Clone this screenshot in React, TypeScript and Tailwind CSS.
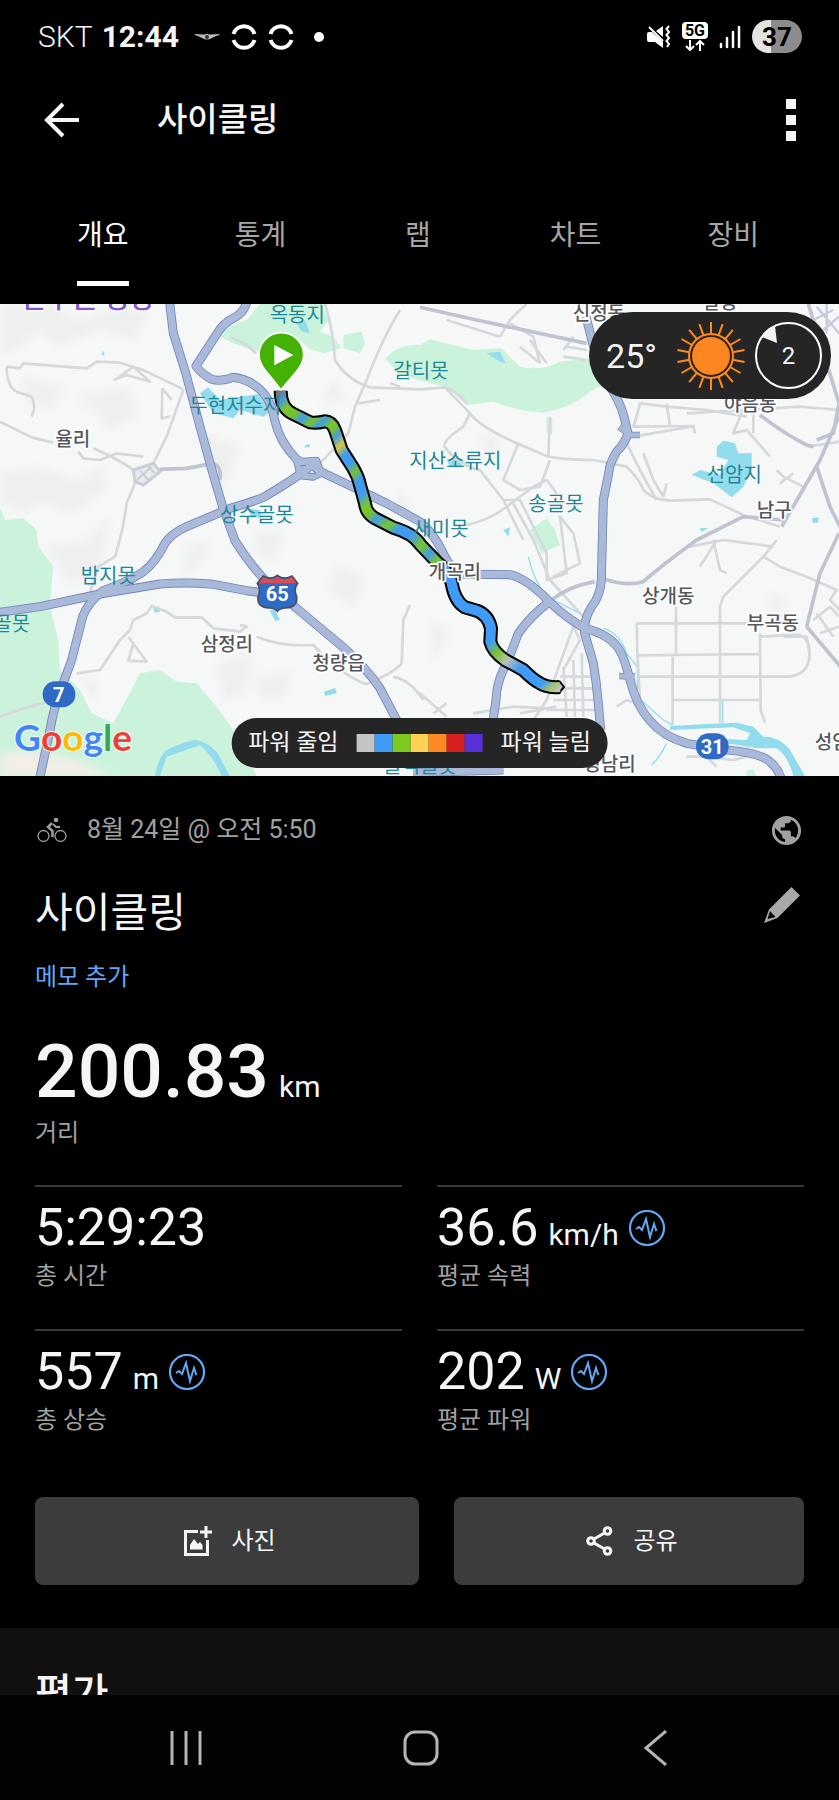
import { MdPublic } from "react-icons/md";

const tabs = ["개요", "통계", "랩", "차트", "장비"];

const stats = [
  { value: "5:29:23", unit: "", label: "총 시간", badge: false },
  { value: "36.6", unit: "km/h", label: "평균 속력", badge: true },
  { value: "557", unit: "m", label: "총 상승", badge: true },
  { value: "202", unit: "W", label: "평균 파워", badge: true },
];

const legend = [
  "bg-[#c4c4c6]",
  "bg-[#3f9bf5]",
  "bg-[#7ccb1c]",
  "bg-[#ffd152]",
  "bg-[#ff8a24]",
  "bg-[#d6211f]",
  "bg-[#5a31d8]",
];

// Map units: three to a CSS pixel at phone width
const highways = [
  "M508 0L520 100L556 215L600 380L640 525L668 620L705 722Q740 780 790 835L890 925L1030 1042Q1100 1105 1140 1165L1190 1260L1225 1340",
  "M742 0Q735 35 705 52Q670 70 655 95L588 198Q600 218 635 238Q660 246 700 232Q760 240 795 285Q815 310 824 360Q838 425 890 478L930 500L1040 552L1160 610L1260 665Q1300 700 1325 750Q1345 800 1380 822L1530 824Q1580 835 1648 905Q1700 955 1755 985Q1820 1000 1850 1038Q1870 1060 1890 1140Q1908 1215 1950 1262Q1990 1310 2060 1330L2180 1350Q2280 1358 2310 1385Q2335 1405 2345 1440",
  "M915 510Q880 540 790 592Q740 612 690 625L560 680Q515 700 495 730Q465 790 430 815Q385 845 310 872Q265 905 248 950L215 1080L180 1175Q160 1230 150 1290L118 1440",
  "M-10 938L120 920L300 882L480 852Q560 845 640 853L740 872L800 880",
  "M1758 50L1778 130L1830 260Q1862 310 1872 350L1884 400Q1875 430 1850 455Q1828 490 1826 520L1810 600L1804 840Q1800 890 1775 920Q1750 960 1754 1000L1780 1090Q1790 1150 1795 1210L1802 1290",
  "M1648 905Q1590 950 1555 1000Q1530 1070 1510 1110Q1490 1150 1488 1200L1478 1270",
  "M1240 1418L1510 1410",
];

const ramps =
  "M890 485L950 480L965 520L940 532L900 528Z M1858 380L1890 405L1920 405M1858 1128L1905 1130";

const arterials = [
  "M478 508L560 505L640 490Q665 500 660 540",
  "M1650 905Q1700 860 1785 845",
  "M1815 838Q1880 860 1930 845Q1980 800 2090 720L2230 650L2350 660",
  "M2280 345Q2350 400 2420 435L2440 440",
  "M2345 680L2460 480L2517 350",
  "M2420 980L2460 820L2517 700",
  "M2420 980L2530 1110",
  "M1260 22L1430 60L1760 130",
  "M2425 12L2517 310L2500 400L2450 420",
  "M2450 500L2490 620L2530 700",
];

const streets = [
  "M20 200L60 205L70 190L260 205L290 185L360 188L430 210L550 268",
  "M20 200Q20 260 50 275L95 290Q110 320 95 350",
  "M0 365L95 412L160 428",
  "M235 455L250 475L300 480L350 460L430 470",
  "M280 445Q360 480 400 510",
  "M345 240L400 200L450 245L380 225L340 240",
  "M550 270L500 410L460 490L405 550L380 610Q370 690 345 770L295 800L250 940",
  "M487 265L485 355L510 350M487 265L515 300",
  "M230 1120L300 1110L360 1020L390 990L400 960L440 940L455 918L500 935L525 953L605 952L640 985L720 995L740 980L720 975",
  "M385 1010L440 1085L385 1082L400 1030",
  "M770 1010Q840 1040 940 1035L960 1055",
  "M950 1050Q1050 1140 1100 1152Q1180 1120 1205 1090L1210 960L1230 915",
  "M1180 1130Q1230 1140 1270 1200",
  "M0 1250Q80 1220 130 1210",
  "M1200 30Q1150 110 1100 240L1065 320L1045 400L960 490",
  "M975 12Q1000 90 1005 180Q1040 240 1110 262L1260 268L1335 262Q1370 270 1400 310",
  "M1075 310L1140 300M1170 250L1200 260",
  "M690 110Q740 130 768 160",
  "M1335 262L1410 340Q1440 380 1540 425L1645 470Q1700 480 1780 480L1880 500Q1920 540 1930 570Q1960 600 2010 602L2130 598L2230 645L2340 680",
  "M1410 340L1390 380Q1330 420 1333 440Q1380 500 1440 510L1510 600L1570 720",
  "M1645 470L1650 350",
  "M1555 430L1510 540L1560 570L1620 560L1650 480",
  "M1400 675Q1470 660 1520 620L1600 560L1640 540L1670 580",
  "M1540 610L1600 720L1650 840L1750 950",
  "M1510 600L1560 600L1640 760L1640 840L1700 820L1680 650L1720 700L1740 790L1660 830",
  "M1560 140L1620 190M1530 70L1600 110L1620 190M1340 60L1500 110M1500 110L1530 60L1560 30L1580 12M1590 120L1640 190",
  "M1700 140L1760 150M1690 170L1760 180M1720 110L1690 150",
  "M1910 350L1900 380L2080 378L2085 400M1900 410L2085 378M2000 310L2010 378",
  "M1910 350L1920 310L2000 320L2120 330L2240 350M2240 300L2200 400L2240 390L2310 470M2260 300L2260 400M2060 340L2400 320L2517 330",
  "M1880 430L1930 530L1970 600M1930 460L1960 540L1990 590M2000 550L1990 590",
  "M2070 740L2170 720L2320 740M2150 720L2100 800M2140 720L2160 810L2180 820",
  "M1910 250L2170 248M2350 1010L2420 1010Q2430 1060 2428 1080",
  "M2330 720L2290 770L2170 890L2160 920L2160 1270",
  "M2290 770L2340 800L2420 830L2510 870L2490 900L2530 940",
  "M1910 970L2260 970M1910 970L1912 1060L1920 1200M2028 920L2028 1060M1915 1066L2280 1062M1920 1130L2370 1130Q2430 1120 2428 1060Q2430 1010 2390 1004L2280 1010M2020 1200L2280 1200M2018 1066L2018 1272M2280 1000L2282 1230L2295 1268",
  "M1850 1220L1880 1200L1910 1210",
  "M1690 1100L1700 1250M1720 1080L1725 1250M1745 1060L1750 1250M1680 1130L1780 1130M1670 1165L1780 1165M1660 1200L1790 1200M1640 1230L1790 1230M1560 1240L1670 1220",
  "M1690 1110L1740 1020L1720 980L1640 1200L1600 1260",
  "M1420 1240L1540 1220L1640 1225",
  "M1260 1180L1340 1250M1300 1240L1340 1210",
  "M2060 1370L2120 1370L2150 1400M2120 1370L2200 1380L2240 1370",
  "M2440 960L2490 920L2517 950M2460 1000L2517 980M2450 940L2500 1010",
  "M2420 440L2490 430L2517 425M2330 510L2350 530L2410 560M2340 550L2380 520",
];

const mapLabels = [
  { x: 809, y: 65, text: "옥동지", water: true },
  { x: 568, y: 338, text: "두현저수지", water: true },
  { x: 1180, y: 234, text: "갈티못", water: true },
  { x: 1228, y: 505, text: "지산소류지", water: true },
  { x: 660, y: 666, text: "상수골못", water: true },
  { x: 1585, y: 632, text: "송골못", water: true },
  { x: 1240, y: 708, text: "새미못", water: true },
  { x: 2120, y: 546, text: "선암지", water: true },
  { x: 242, y: 850, text: "밤지못", water: true },
  { x: -20, y: 992, text: "골못", water: true },
  { x: 1150, y: 1420, text: "들넉골못", water: true },
  { x: 166, y: 438, text: "율리" },
  { x: 602, y: 1052, text: "삼정리" },
  { x: 937, y: 1110, text: "청량읍" },
  { x: 1286, y: 838, text: "개곡리" },
  { x: 1718, y: 60, text: "신정동" },
  { x: 2108, y: 28, text: "달동" },
  { x: 2172, y: 332, text: "야음동" },
  { x: 2270, y: 650, text: "남구" },
  { x: 1926, y: 908, text: "상개동" },
  { x: 2240, y: 990, text: "부곡동" },
  { x: 2444, y: 1346, text: "성암동" },
  { x: 1750, y: 1412, text: "성남리" },
];

const routePath =
  "M842 272Q842 325 880 342L930 367Q950 370 975 364Q995 365 1005 390L1025 450L1060 505Q1075 530 1080 555L1095 610Q1098 640 1125 655L1180 683Q1240 700 1262 735L1310 785Q1348 815 1355 850Q1365 905 1395 922L1430 932Q1465 945 1473 985L1471 1025Q1478 1055 1515 1080L1570 1110Q1600 1140 1620 1150Q1645 1164 1680 1161";

const routeStops: [number, string][] = [
  [0, "#77726f"],
  [0.02, "#4f97d8"],
  [0.042, "#79c52a"],
  [0.066, "#74c12f"],
  [0.086, "#419bec"],
  [0.109, "#79c52a"],
  [0.126, "#419bec"],
  [0.146, "#79c52a"],
  [0.158, "#74c12f"],
  [0.176, "#4b9ade"],
  [0.2, "#d9c63f"],
  [0.222, "#419bec"],
  [0.248, "#419bec"],
  [0.271, "#74c12f"],
  [0.29, "#419bec"],
  [0.322, "#419bec"],
  [0.35, "#79c52a"],
  [0.37, "#74c12f"],
  [0.39, "#419bec"],
  [0.421, "#79c52a"],
  [0.445, "#419bec"],
  [0.478, "#419bec"],
  [0.514, "#79c52a"],
  [0.542, "#419bec"],
  [0.565, "#79c52a"],
  [0.585, "#3f9bf5"],
  [0.8, "#3f9bf5"],
  [0.831, "#79c52a"],
  [0.862, "#bcc0bb"],
  [0.897, "#3f9bf5"],
  [0.962, "#3f9bf5"],
  [0.984, "#a9c46a"],
  [1, "#c4c4c0"],
];

function StatusBar() {
  return (
    <div className="flex h-[73px] shrink-0 items-center justify-between pr-[37px] pl-[38px] text-[30px] leading-9">
      <div className="flex items-center">
        <span className="font-light">SKT</span>
        <span className="ml-[9px] font-bold">12:44</span>
        <svg viewBox="0 0 26 8" className="ml-[15px] h-2 w-[26px]" fill="#bbb">
          <path d="M0 1L10 1.500Q13 .5 16 1.500L26 1L24 2.500L22 3L18 5Q13 8 8 5L4 3L2 2.500Z" />
          <circle cx="13" cy="4" r="2" fill="#333" />
        </svg>
        {[0, 1].map((n) => (
          <svg key={n} viewBox="0 0 26 26" className="ml-[11px] size-[26px]" fill="none" stroke="#fff" strokeWidth="4">
            <path d="M2.500 10A11 11 0 0 1 23.500 10M2.500 16A11 11 0 0 0 23.500 16" />
          </svg>
        ))}
        <span className="ml-5 size-[10px] rounded-full bg-white" />
      </div>
      <div className="flex items-center gap-[11px]">
        <svg viewBox="0 0 24 24" className="size-6" fill="#fff">
          <path d="M0 9Q0 7 2 7H5L16 17V23L8 17H2Q0 17 0 15ZM9 6L16 1V12Z" />
          <path d="M2 2L16 16" stroke="#fff" strokeWidth="2" />
          <path d="M22 1L19.500 4L22 7L19.500 10L22 13L19.500 16L22 19L20 22" fill="none" stroke="#fff" strokeWidth="2" />
        </svg>
        <span className="flex flex-col items-center">
          <span className="rounded-sm bg-white px-[3px] text-base leading-[17px] font-bold text-black">5G</span>
          <svg viewBox="0 0 20 12" className="h-3 w-5" fill="none" stroke="#fff" strokeWidth="2">
            <path d="M5 1V11M1 7L5 11L9 7M15 12V2M11 6L15 2L19 6" />
          </svg>
        </span>
        <svg viewBox="0 0 22 24" className="h-6 w-[22px]" stroke="#fff" strokeWidth="2.500" strokeLinecap="round">
          <path d="M2 19V22M8 13V22M14 7V22M20 2V22" />
        </svg>
        <span className="flex h-[33px] w-[50px] items-center justify-center rounded-full bg-linear-to-r from-[#e4e4e4] from-37% to-[#8c8c8c] to-37% text-[26px] leading-8 font-bold text-black">
          37
        </span>
      </div>
    </div>
  );
}

function RouteMap() {
  return (
    <svg viewBox="0 12 2517 1416" preserveAspectRatio="xMidYMid slice" className="block size-full">
      <defs>
        <linearGradient id="power" gradientUnits="userSpaceOnUse" x1="842" y1="270" x2="1685" y2="1160">
          {routeStops.map(([offset, color]) => (
            <stop key={offset} offset={offset} stopColor={color} />
          ))}
        </linearGradient>
        <filter id="soft">
          <feGaussianBlur stdDeviation="12" />
        </filter>
      </defs>
      <rect y="12" width="2517" height="1416" fill="#f6f7f7" />

      {/* Hill shading */}
      <g fill="#eeefef" filter="url(#soft)">
        <path d="M0 20L150 15L230 60L380 20L450 40L400 120L300 90L180 140L120 100L40 150L0 160Z" />
        <path d="M60 230L200 260L150 330L80 300ZM230 290L380 260L420 340L330 390L290 340Z" />
        <path d="M0 520L120 500L230 540L300 500L330 560L220 640L120 610L60 640L0 600Z" />
        <path d="M130 740L260 720L330 650L300 820L200 850L170 790ZM560 740L640 720L600 800L540 830Z" />
        <path d="M600 400L720 440L680 560L640 520ZM760 690L860 700L820 780L770 760Z" />
        <path d="M240 1120L300 1150L280 1210ZM650 1090L760 1060L740 1180L670 1200Z" />
        <path d="M1000 790L1100 840L1060 920L990 880ZM760 1130L880 1120L850 1200L780 1190Z" />
        <path d="M1430 400L1500 420L1480 480ZM1290 960L1350 1000L1300 1090ZM2300 880L2370 900L2330 960Z" />
        <path d="M1190 560L1240 620L1190 660ZM1000 240L1040 300L960 310Z" />
      </g>

      {/* Parks */}
      <g fill="#cbf3dc">
        <path d="M670 85L740 60L780 12H965L985 60L960 95L1000 110L1025 145L970 160L925 145L900 120L860 110L770 155L700 130L660 110Z" />
        <path d="M1030 105L1085 95L1095 130L1080 160L1030 145Z" />
        <path d="M1155 175Q1200 130 1260 135L1290 118L1420 150L1505 145L1560 200Q1620 215 1680 185L1770 175L1820 250L1770 275Q1720 320 1630 338Q1540 330 1480 305L1400 315L1340 262L1200 225Z" />
        <path d="M1640 352L1658 355L1656 405L1640 400Z" />
        <path d="M1590 690L1640 655L1665 690L1680 735L1625 760Z" />
        <path d="M0 620L15 660L70 655L110 690L115 740L160 800L155 850L150 920L175 1020L180 1110L240 1170L275 1240L340 1270L400 1160L420 1120L480 1110L530 1145L590 1150L650 1220L700 1290L770 1428H0Z" />
        <path d="M2240 1410L2260 1408L2270 1428H2240Z" />
      </g>
      <path d="M0 1360L90 1350L230 1380L340 1428H0Z" fill="#f3eee6" filter="url(#soft)" />

      {/* Water */}
      <g fill="#93dcee">
        <path d="M890 70L915 60L930 100L905 95Z" />
        <path d="M600 280L625 262L660 300L720 290L790 280L830 320L790 350L720 330L700 355L640 340Z" />
        <path d="M2150 440L2170 422L2205 430L2215 460L2255 460L2255 510L2230 560L2195 592L2140 550L2075 525L2100 510L2160 525L2185 480L2150 470Z" />
        <path d="M1460 160L1500 155L1518 190L1500 185Z" />
        <path d="M740 625L780 630L785 655L755 650ZM460 925L475 918L480 935L465 938Z" />
        <path d="M808 930L825 930L840 960L825 962ZM972 1175L1005 1164L1010 1180L975 1188Z" />
        <path d="M1510 690L1530 682L1525 710ZM2100 684L2124 684L2105 696ZM2436 655L2456 652L2454 668L2438 668Z" />
        <path d="M915 435L930 432L928 442L915 442ZM303 165L310 152L314 166ZM1340 478L1390 478L1385 500L1350 500Z" />
        <path d="M465 1428Q475 1370 500 1350Q540 1330 585 1320Q620 1325 650 1355L690 1428H665Q640 1370 600 1335L500 1370L480 1428Z" />
        <path d="M2010 1278L2120 1272L2210 1268L2260 1280L2290 1310Q2340 1310 2370 1350L2415 1428H2380Q2365 1370 2330 1345L2270 1345L2180 1330L2120 1325L2130 1315L2240 1320L2250 1300L2200 1282L2010 1290Z" />
      </g>
      <path
        d="M1585 770Q1600 840 1640 890L1740 940M1810 985Q1860 1000 1880 1060L1912 1100V1190L1990 1260L2020 1276M2168 1200V1268M2000 1330Q1980 1370 1955 1395"
        fill="none"
        stroke="#93dcee"
        strokeWidth="4"
      />

      {/* Roads */}
      <g fill="none" stroke="#d6d9dc" strokeWidth="8" strokeLinejoin="round">
        {streets.map((d) => (
          <path key={d} d={d} />
        ))}
      </g>
      <g fill="none" stroke="#bfc4d0" strokeWidth="11" strokeLinejoin="round">
        {arterials.map((d) => (
          <path key={d} d={d} />
        ))}
      </g>
      <path d="M400 510L460 490L480 515L430 555L405 545Z" fill="#e9ebee" stroke="#c9ced8" strokeWidth="9" />
      <path d="M420 512L445 540M455 500L410 540M440 495L465 520" stroke="#c9ced8" strokeWidth="6" />
      <path d="M2450 20L2517 100M2440 60L2500 30M2470 90L2517 50M2480 12V100" stroke="#c6cbe0" strokeWidth="7" />
      <g fill="none" stroke="#7484b8" strokeWidth="27" strokeLinejoin="round">
        {highways.map((d) => (
          <path key={d} d={d} />
        ))}
        <path d={ramps} strokeWidth="20" />
      </g>
      <g fill="none" stroke="#a9b9d9" strokeWidth="22" strokeLinejoin="round">
        {highways.map((d) => (
          <path key={d} d={d} />
        ))}
        <path d={ramps} strokeWidth="15" />
      </g>
      <path d="M892 482L955 482L960 522L938 530L900 524Z" fill="#a9b9d9" />
      <path d="M900 498L918 496M925 520L935 510L948 520Z" fill="#eef1f6" stroke="#6e80b0" strokeWidth="3" />

      {/* Ride */}
      <g fill="none" strokeLinejoin="round">
        <path d={routePath} stroke="#000" strokeWidth="42" />
        <path d="M1678 1143L1692 1161L1678 1178" stroke="#000" strokeWidth="6" fill="#c4c4c0" />
        <path d={routePath} stroke="url(#power)" strokeWidth="30" />
      </g>

      {/* Place names */}
      <g
        fontFamily="'Noto Sans CJK KR', sans-serif"
        strokeLinejoin="round"
        paintOrder="stroke"
      >
        {mapLabels.map((label) => (
          <text
            key={label.text}
            x={label.x}
            y={label.y}
            fill={label.water ? "#1c8798" : "#55585c"}
            stroke={label.water ? "none" : "#fff"}
            strokeWidth="10"
            fontSize={label.water ? 60 : 57}
            fontWeight={label.water ? 400 : 500}
          >
            {label.text}
          </text>
        ))}
        <text x="60" y="24" fill="#8155d0" stroke="#fff" strokeWidth="8" fontSize="84" fontWeight="500">
          연수원 성당
        </text>
      </g>

      {/* Highway shields */}
      <g fontFamily="Roboto, sans-serif" fontWeight="700" fontSize="60" fill="#fff" textAnchor="middle">
        <path d="M790 828Q812 842 832 826Q852 842 876 828L893 850Q880 868 890 890Q894 922 856 924Q840 924 832 934Q824 924 808 924Q770 922 774 890Q784 868 772 850Z" fill="#2f6ac4" stroke="#474d5c" strokeWidth="5" />
        <path d="M790 831Q812 845 832 830Q852 845 876 831L889 850H776Z" fill="#df4b50" />
        <text x="832" y="903">65</text>
        <rect x="128" y="1144" width="98" height="78" rx="38" fill="#2f6ac4" />
        <text x="176" y="1205">7</text>
        <rect x="2088" y="1300" width="98" height="78" rx="38" fill="#2f6ac4" />
        <text x="2137" y="1361">31</text>
      </g>

      {/* Start pin */}
      <path
        d="M843 269L800 216Q777 190 777 165A67 67 0 0 1 911 165Q911 190 888 216Z"
        fill="#43b202"
        stroke="#fff"
        strokeWidth="5"
      />
      <path d="M823 135L880 165L823 196Z" fill="#fff" />

      <text
        x="42"
        y="1352"
        fontFamily="Lato, sans-serif"
        fontWeight="700"
        fontSize="111"
        stroke="#fff"
        strokeWidth="5"
        strokeLinejoin="round"
        paintOrder="stroke"
      >
        <tspan fill="#4285f4">G</tspan>
        <tspan fill="#ea4335">o</tspan>
        <tspan fill="#fbbc05">o</tspan>
        <tspan fill="#4285f4">g</tspan>
        <tspan fill="#34a853">l</tspan>
        <tspan fill="#ea4335">e</tspan>
      </text>
    </svg>
  );
}

function WeatherPill() {
  const rays = Array.from({ length: 18 }, (_, n) => n * 20);

  return (
    <div className="absolute top-2 right-2 flex h-[87px] items-center rounded-full bg-[#252525] pr-[9px] pl-[17px]">
      <span className="text-[34px] leading-10">25°</span>
      <svg viewBox="-34 -34 68 68" className="ml-5 size-[68px]" stroke="#ff8b1e" fill="none">
        <circle r="19" fill="#ff8520" stroke="none" />
        <circle r="22" strokeWidth="2" />
        {rays.map((angle) => (
          <path key={angle} d="M0 -22V-34" strokeWidth="2" transform={`rotate(${angle})`} />
        ))}
      </svg>
      <span className="relative ml-[10px] flex size-[67px] items-center justify-center rounded-full border-2 border-white text-2xl">
        2
        <svg viewBox="0 0 67 67" className="absolute -top-[2px] -left-[2px] size-[67px]" fill="#f4f4f4">
          <path d="M7 15Q12 8 20 4L22 21Z" />
        </svg>
      </span>
    </div>
  );
}

function PulseBadge() {
  return (
    <svg viewBox="0 0 36 36" className="size-9 self-center" fill="none" stroke="#62a8f5">
      <circle cx="18" cy="18" r="17" strokeWidth="2.200" />
      <path d="M7 19L10 17L13 20L17 9L21 27L25 14L27 20L28 19" strokeWidth="2" />
    </svg>
  );
}

export default function App() {
  return (
    <div className="flex h-screen flex-col overflow-hidden bg-black font-[Roboto,'Noto_Sans_CJK_KR',sans-serif] text-[#f5f5f5]">
      <StatusBar />

      <header className="flex h-[94px] shrink-0 items-center pr-[43px] pl-11">
        <button type="button" aria-label="뒤로">
          <svg viewBox="0 0 36 36" className="size-9" fill="none" stroke="currentColor" strokeWidth="4">
            <path d="M35 18H4M19 2L3 18L19 34" />
          </svg>
        </button>
        <h1 className="ml-[77px] text-[33px] leading-10 font-medium">사이클링</h1>
        <button type="button" aria-label="더보기" className="ml-auto flex flex-col gap-[6px]">
          <span className="size-[10px] bg-current" />
          <span className="size-[10px] bg-current" />
          <span className="size-[10px] bg-current" />
        </button>
      </header>

      <nav className="grid shrink-0 grid-cols-5 pt-[49px] pr-[27px] pb-[18px] pl-6">
        {tabs.map((tab, n) => (
          <button key={tab} type="button" className="flex justify-center">
            <span
              className={
                n === 0
                  ? "border-b-[5px] border-white pb-[25px] text-[28px] leading-10 text-white"
                  : "border-b-[5px] border-transparent pb-[25px] text-[28px] leading-10 text-[#a6a6a6]"
              }
            >
              {tab}
            </span>
          </button>
        ))}
      </nav>

      <main className="min-h-0 flex-1 overflow-hidden">
        <section className="relative aspect-[839/472] overflow-hidden">
          <RouteMap />
          <WeatherPill />
          <div className="absolute bottom-2 left-1/2 flex h-[50px] -translate-x-1/2 items-center gap-[18px] rounded-full bg-[#252525] px-[17px] text-[23px] whitespace-nowrap">
            <span>파워 줄임</span>
            <span className="flex">
              {legend.map((color) => (
                <span key={color} className={`size-[18px] ${color}`} />
              ))}
            </span>
            <span>파워 늘림</span>
          </div>
        </section>

        <section className="px-[35px] pt-8">
          <div className="flex h-11 items-center text-[25px] text-[#a0a0a0]">
            <svg viewBox="0 0 30 26" className="ml-[2px] h-[26px] w-[30px]" fill="none" stroke="currentColor">
              <circle cx="6.500" cy="19" r="5.500" strokeWidth="1.300" />
              <circle cx="23.500" cy="19" r="5.500" strokeWidth="1.300" />
              <circle cx="19" cy="3" r="2.300" fill="currentColor" stroke="none" />
              <path d="M15 6L11 10L15.500 14V20" strokeWidth="2.500" />
              <path d="M16 7L19 10H23" strokeWidth="1.800" />
            </svg>
            <span className="ml-5">8월 24일 @ 오전 5:50</span>
            <MdPublic className="ml-auto size-[35px]" />
          </div>

          <div className="mt-[31px] flex items-center justify-between">
            <h2 className="text-[41px] leading-[60px]">사이클링</h2>
            <button type="button" aria-label="이름 편집" className="mr-1 mb-4">
              <svg viewBox="0 0 36 36" className="size-9" fill="#a8a8a8">
                <path fillRule="evenodd" d="M27.500 0L36 8.500L13.500 31L0 36L5 22.500ZM6 24L3.500 32L11.500 30Z" />
              </svg>
            </button>
          </div>
          <button type="button" className="mt-4 block text-2xl leading-9 text-[#62a8f5]">
            메모 추가
          </button>

          <div className="mt-8 flex items-baseline gap-[10px]">
            <span className="text-[75px] leading-[88px] font-medium">200.83</span>
            <span className="text-[30px]">km</span>
          </div>
          <p className="text-2xl leading-9 text-[#a0a0a0]">거리</p>

          <div className="mt-[34px] grid grid-cols-2 gap-x-[35px]">
            {stats.map((stat) => (
              <div key={stat.label} className="h-36 border-t-2 border-[#3a3a3a] pt-[10px]">
                <div className="flex items-baseline gap-[10px]">
                  <span className="text-[52px] leading-[61px]">{stat.value}</span>
                  {stat.unit && <span className="text-[30px]">{stat.unit}</span>}
                  {stat.badge && <PulseBadge />}
                </div>
                <p className="text-2xl leading-9 text-[#a0a0a0]">{stat.label}</p>
              </div>
            ))}
          </div>

          <div className="mt-6 flex gap-[35px] text-2xl">
            <button type="button" className="flex h-[88px] grow-11 basis-0 items-center justify-center gap-5 rounded-lg bg-[#3c3c3c] pl-[5px]">
              <svg viewBox="0 0 28 30" className="h-[30px] w-7" fill="none" stroke="currentColor" strokeWidth="3">
                <path d="M14 5.500H1.500V28.500H23.500V14M22 0V12M16 6H28" />
                <path d="M6 23.500V19L10 13L14 18L16 16L18.500 19V23.500Z" fill="currentColor" stroke="none" />
              </svg>
              사진
            </button>
            <button type="button" className="flex h-[88px] grow-10 basis-0 items-center justify-center gap-5 rounded-lg bg-[#3c3c3c] pl-[5px]">
              <svg viewBox="0 0 28 30" className="h-[30px] w-7" fill="none" stroke="currentColor" strokeWidth="3">
                <circle cx="5" cy="15" r="3.300" />
                <circle cx="21.500" cy="5" r="3.300" />
                <circle cx="21.500" cy="25" r="3.300" />
                <path d="M8 13L18.500 7M8 17L18.500 23" />
              </svg>
              공유
            </button>
          </div>
        </section>

        <section className="mt-[43px] bg-[#101010] px-[35px] pt-9 pb-10">
          <h2 className="text-[40px] leading-[60px] font-medium">평가</h2>
        </section>
      </main>

      <footer className="flex h-[105px] shrink-0 items-center justify-around bg-[#020202] pr-[66px] pl-[70px] text-[#b5b5b5]">
        <button type="button" aria-label="최근 앱">
          <svg viewBox="0 0 36 36" className="size-9" stroke="currentColor" strokeWidth="3">
            <path d="M3 1V35M17 1V35M31 1V35" />
          </svg>
        </button>
        <button type="button" aria-label="홈">
          <svg viewBox="0 0 36 36" className="size-9" fill="none" stroke="currentColor" strokeWidth="3">
            <rect x="2" y="2" width="32" height="32" rx="10" />
          </svg>
        </button>
        <button type="button" aria-label="뒤로 가기">
          <svg viewBox="0 0 36 36" className="size-9" fill="none" stroke="currentColor" strokeWidth="3">
            <path d="M28 1L8 18L28 35" />
          </svg>
        </button>
      </footer>
    </div>
  );
}
